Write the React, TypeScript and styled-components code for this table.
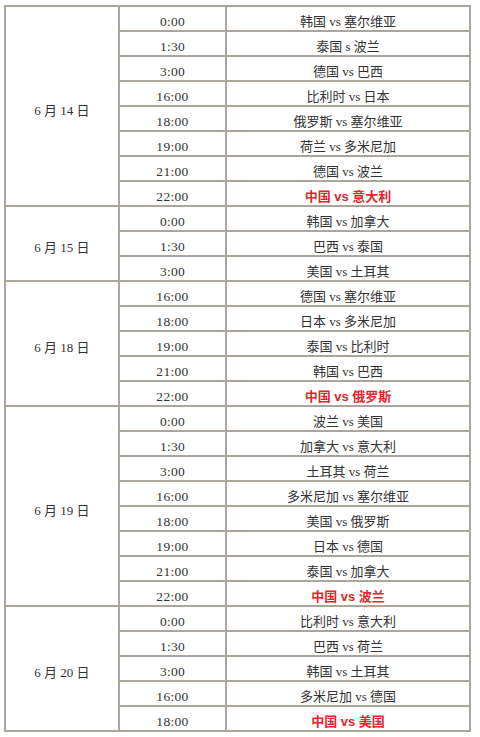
import styled, { createGlobalStyle } from "styled-components";

const GlobalStyle = createGlobalStyle`
  body {
    margin: 0;
    background: #ffffff;
    font-family: "Liberation Serif", "Noto Sans CJK SC", serif;
  }
`;

const Wrapper = styled.div`
  padding: 5px 0 0 4px;
`;

const Table = styled.table`
  border-collapse: collapse;
  width: 467px;
  table-layout: fixed;
  border: 2px solid #aaa69c;
  font-size: 13px;
  color: #333333;
`;

const Cell = styled.td`
  border: 2px solid #aaa69c;
  height: 25px;
  padding: 6px 0 0 0;
  box-sizing: border-box;
  text-align: center;
  vertical-align: middle;
  line-height: 17px;
  white-space: nowrap;
`;

const Time = styled(Cell)`
  font-size: 13.5px;
  letter-spacing: 0.3px;
`;

const DateCell = styled(Cell)`
  padding-top: 8px;
`;

const Match = styled.span<{ $hot?: boolean }>`
  color: ${(p) => (p.$hot ? "#e3262b" : "#333333")};
  font-weight: ${(p) => (p.$hot ? 700 : 400)};
  font-family: ${(p) =>
    p.$hot
      ? '"Liberation Sans", "Noto Sans CJK SC", sans-serif'
      : '"Liberation Serif", "Noto Sans CJK SC", serif'};
`;

type Game = { time: string; match: string; hot?: boolean };
type Day = { date: string; games: Game[] };

const schedule: Day[] = [
  {
    date: "6 月 14 日",
    games: [
      { time: "0:00", match: "韩国 vs 塞尔维亚" },
      { time: "1:30", match: "泰国 s 波兰" },
      { time: "3:00", match: "德国 vs 巴西" },
      { time: "16:00", match: "比利时 vs 日本" },
      { time: "18:00", match: "俄罗斯 vs 塞尔维亚" },
      { time: "19:00", match: "荷兰 vs 多米尼加" },
      { time: "21:00", match: "德国 vs 波兰" },
      { time: "22:00", match: "中国 vs 意大利", hot: true },
    ],
  },
  {
    date: "6 月 15 日",
    games: [
      { time: "0:00", match: "韩国 vs 加拿大" },
      { time: "1:30", match: "巴西 vs 泰国" },
      { time: "3:00", match: "美国 vs 土耳其" },
    ],
  },
  {
    date: "6 月 18 日",
    games: [
      { time: "16:00", match: "德国 vs 塞尔维亚" },
      { time: "18:00", match: "日本 vs 多米尼加" },
      { time: "19:00", match: "泰国 vs 比利时" },
      { time: "21:00", match: "韩国 vs 巴西" },
      { time: "22:00", match: "中国 vs 俄罗斯", hot: true },
    ],
  },
  {
    date: "6 月 19 日",
    games: [
      { time: "0:00", match: "波兰 vs 美国" },
      { time: "1:30", match: "加拿大 vs 意大利" },
      { time: "3:00", match: "土耳其 vs 荷兰" },
      { time: "16:00", match: "多米尼加 vs 塞尔维亚" },
      { time: "18:00", match: "美国 vs 俄罗斯" },
      { time: "19:00", match: "日本 vs 德国" },
      { time: "21:00", match: "泰国 vs 加拿大" },
      { time: "22:00", match: "中国 vs 波兰", hot: true },
    ],
  },
  {
    date: "6 月 20 日",
    games: [
      { time: "0:00", match: "比利时 vs 意大利" },
      { time: "1:30", match: "巴西 vs 荷兰" },
      { time: "3:00", match: "韩国 vs 土耳其" },
      { time: "16:00", match: "多米尼加 vs 德国" },
      { time: "18:00", match: "中国 vs 美国", hot: true },
    ],
  },
];

const App = () => {
  return (
    <>
      <GlobalStyle />
      <Wrapper>
        <Table>
          <colgroup>
            <col style={{ width: 114 }} />
            <col style={{ width: 107 }} />
            <col />
          </colgroup>
          <tbody>
            {schedule.map((day) =>
              day.games.map((game, i) => (
                <tr key={day.date + game.time}>
                  {i === 0 && (
                    <DateCell rowSpan={day.games.length}>{day.date}</DateCell>
                  )}
                  <Time>{game.time}</Time>
                  <Cell>
                    <Match $hot={game.hot}>{game.match}</Match>
                  </Cell>
                </tr>
              ))
            )}
          </tbody>
        </Table>
      </Wrapper>
    </>
  );
};

export default App;
